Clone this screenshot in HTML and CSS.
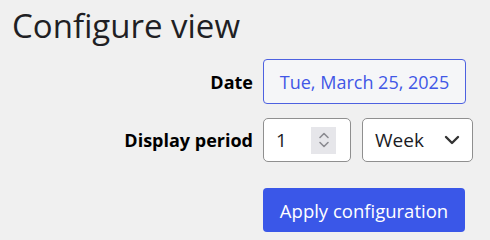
FILE: index.html
```html
<!DOCTYPE html>
<html lang="en">
<head>
<meta charset="utf-8">
<title>Configure view</title>
<link rel="stylesheet" href="styles.css">
</head>
<body>
<main class="page">
  <h1 class="title">Configure view</h1>
  <form class="config">
    <label class="label" for="date">Date</label>
    <div class="field">
      <button type="button" id="date" class="date-btn">Tue, March 25, 2025</button>
    </div>
    <label class="label" for="count">Display period</label>
    <div class="field period">
      <div class="number">
        <input id="count" class="number-input" type="text" value="1">
        <span class="spinner">
          <svg width="12" height="20" viewBox="0 0 12 20" aria-hidden="true">
            <path d="M2 7.5 L6 3.5 L10 7.5" fill="none" stroke="#8a8a90" stroke-width="1.6" stroke-linecap="round" stroke-linejoin="round"/>
            <path d="M2 12.5 L6 16.5 L10 12.5" fill="none" stroke="#8a8a90" stroke-width="1.6" stroke-linecap="round" stroke-linejoin="round"/>
          </svg>
        </span>
      </div>
      <div class="select">
        <span class="select-value">Week</span>
        <svg width="16" height="10" viewBox="0 0 16 10" aria-hidden="true">
          <path d="M2 2 L8 8 L14 2" fill="none" stroke="#333" stroke-width="2.4" stroke-linecap="round" stroke-linejoin="round"/>
        </svg>
      </div>
    </div>
    <span></span>
    <div class="field actions">
      <button type="button" class="apply">Apply configuration</button>
    </div>
  </form>
</main>
</body>
</html>
```

FILE: styles.css
```css
html, body {
  margin: 0;
  padding: 0;
  background: #f0f0f0;
}

body {
  font-family: "Open Sans", "Noto Sans", "Liberation Sans", sans-serif;
  color: #1b1b1f;
}

.page {
  padding: 0 0 0 12px;
}

.title {
  margin: 0;
  padding-top: 4px;
  font-size: 33px;
  font-weight: 400;
  line-height: 44px;
  color: #1f1f24;
}

.config {
  display: grid;
  grid-template-columns: 241px auto;
  column-gap: 10px;
  row-gap: 14px;
  align-items: center;
  margin-top: 11px;
}

.label {
  justify-self: end;
  font-size: 18px;
  font-weight: 700;
  color: #000;
}

.field {
  display: flex;
  align-items: center;
}

.period {
  gap: 11px;
}

.date-btn {
  box-sizing: border-box;
  width: 203px;
  height: 45px;
  border: 1px solid #4d61e0;
  border-radius: 4px;
  background: #f5f6f8;
  color: #4157e6;
  font-family: inherit;
  font-size: 18px;
  padding: 0;
  text-align: center;
}

.number {
  box-sizing: border-box;
  width: 88px;
  height: 44px;
  border: 1px solid #8f8f8f;
  border-radius: 5px;
  background: #fff;
  display: flex;
  align-items: center;
  padding-left: 12px;
  padding-right: 14px;
}

.number-input {
  flex: 1;
  min-width: 0;
  border: 0;
  outline: 0;
  padding: 0;
  background: transparent;
  font-family: inherit;
  font-size: 19px;
  color: #1b1b1f;
}

.spinner {
  width: 25px;
  height: 27px;
  background: #e6e6ea;
  display: flex;
  align-items: center;
  justify-content: center;
}

.select {
  box-sizing: border-box;
  width: 111px;
  height: 44px;
  border: 1px solid #8f8f8f;
  border-radius: 5px;
  background: #fff;
  display: flex;
  align-items: center;
  justify-content: space-between;
  padding: 0 12px 0 12px;
}

.select-value {
  font-size: 19px;
  color: #1b1b1f;
}

.actions {
  margin-top: 12px;
}

.apply {
  box-sizing: border-box;
  width: 202px;
  height: 44px;
  border: 0;
  border-radius: 4px;
  background: #3a57e8;
  color: #fff;
  font-family: inherit;
  font-size: 18.5px;
  padding: 0;
}
```
